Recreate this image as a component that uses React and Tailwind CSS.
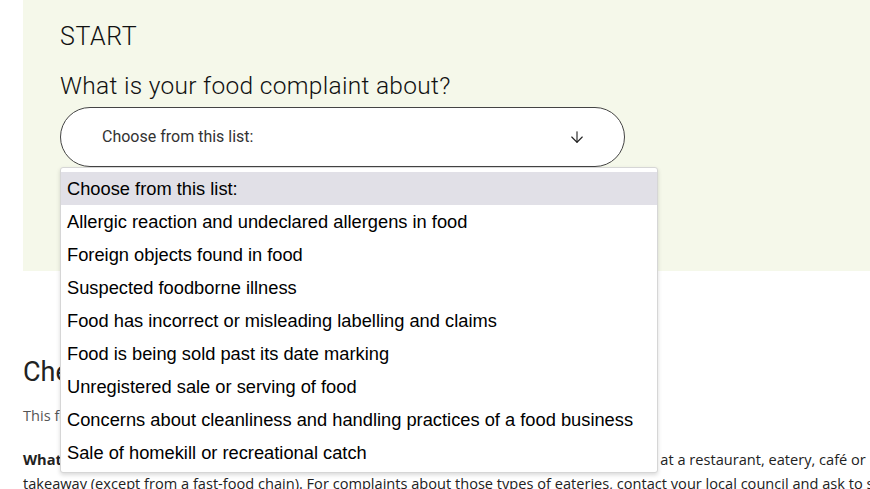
import { ArrowDown } from "lucide-react";

const options = [
  "Choose from this list:",
  "Allergic reaction and undeclared allergens in food",
  "Foreign objects found in food",
  "Suspected foodborne illness",
  "Food has incorrect or misleading labelling and claims",
  "Food is being sold past its date marking",
  "Unregistered sale or serving of food",
  "Concerns about cleanliness and handling practices of a food business",
  "Sale of homekill or recreational catch",
];

const App = () => {
  return (
    <div className="w-[870px] h-[489px] overflow-hidden bg-white pl-[23px]">
      {/* Start panel */}
      <div className="bg-[#f5f8ea] h-[271px] pl-[37px] pt-[20px] mr-[-40px] font-['Roboto',sans-serif] text-[#111]">
        <h2 className="text-[25px] leading-[34px] tracking-[0.6px] font-light">START</h2>
        <h3 className="text-[24.5px] leading-[34px] mt-[15px] font-light tracking-[0.3px]">
          What is your food complaint about?
        </h3>
        <div className="relative w-[565px] mt-[4px]">
          <div className="h-[60px] rounded-full border-[1.5px] border-[#444] bg-white flex items-center justify-between pl-[41px] pr-[38px]">
            <span className="text-[16px] text-[#333]">Choose from this list:</span>
            <ArrowDown size={18} strokeWidth={1.5} className="text-[#222]" />
          </div>
          {/* open list */}
          <ul className="absolute left-0 top-[60px] w-[598px] bg-white border border-[#d6d6d6] rounded-[3px] shadow-[0_2px_4px_rgba(0,0,0,0.15)] pt-[4px] pb-[3px] font-['Liberation_Sans',Arial,sans-serif] text-[18.3px] text-black z-10">
            {options.map((o, i) => (
              <li
                key={o}
                className={
                  "h-[33px] leading-[33px] px-[6px] " +
                  (i === 0 ? "bg-[#e1e0e7]" : "")
                }
              >
                {o}
              </li>
            ))}
          </ul>
        </div>
      </div>

      {/* Below */}
      <div className="pt-[84px] pr-[10px] font-['Open_Sans',sans-serif] text-[#222]">
        <h2 className="font-['Roboto',sans-serif] text-[27px] leading-[34px]">
          Check before you start
        </h2>
        <p className="text-[14.6px] text-[#555] mt-[16px]">
          This form is for complaints about food you have bought or eaten.
        </p>
        <p className="text-[14.6px] leading-[24px] mt-[20px] whitespace-nowrap">
          <b>What can I complain about?</b> Use this form to tell us about any foods that you bought, or ate at a restaurant, eatery, café or
          <br />
          takeaway (except from a fast-food chain). For complaints about those types of eateries, contact your local council and ask to speak
        </p>
      </div>
    </div>
  );
};

export default App;
